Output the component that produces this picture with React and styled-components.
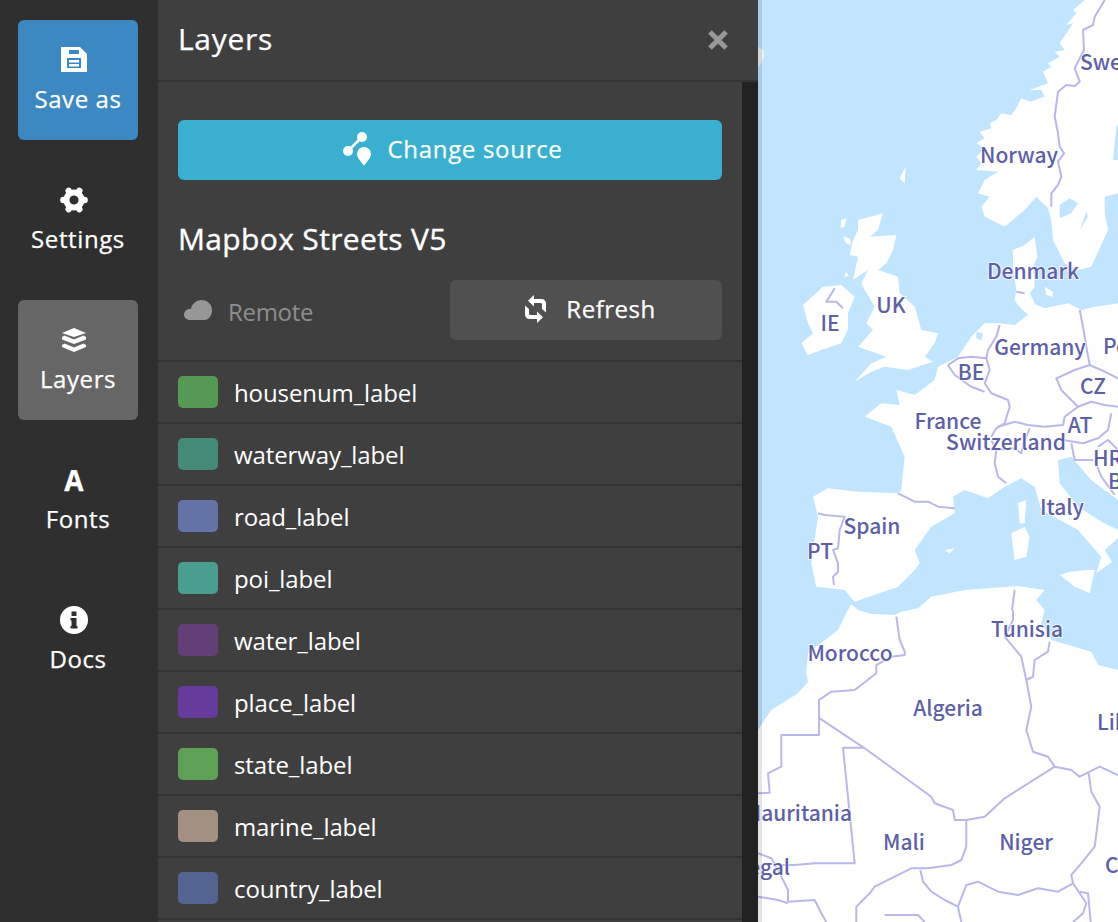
import React from 'react';
import styled, { createGlobalStyle } from 'styled-components';

const Global = createGlobalStyle`
  html, body { margin: 0; padding: 0; height: 100%; overflow: hidden; background: #2f2f2f; }
  * { box-sizing: border-box; }
`;

const Shell = styled.div`
  display: flex;
  width: 100vw;
  height: 100vh;
  overflow: hidden;
  font-family: "Open Sans", "Noto Sans", sans-serif;
  color: #fff;
`;

const Sidebar = styled.nav`
  flex: 0 0 158px;
  display: flex;
  flex-direction: column;
  gap: 20px;
  padding: 20px 18px;
  background: #2f2f2f;
`;

const tones = { primary: '#3b88c3', active: '#666666', plain: 'transparent' };

const NavButton = styled.button`
  width: 120px;
  height: 120px;
  flex: none;
  border: 0;
  border-radius: 6px;
  padding: 26px 0 0;
  background: ${(p) => tones[p.$tone || 'plain']};
  color: #fff;
  font: 400 24px/32px "Open Sans", sans-serif;
  letter-spacing: 0.6px;
  -webkit-text-stroke: 0.25px #fff;
  display: flex;
  flex-direction: column;
  align-items: center;
  gap: 9px;
`;

const NavIcon = styled.span`
  display: flex;
  align-items: center;
  justify-content: center;
  width: 32px;
  height: 28px;
  margin-right: 8px;
  font-weight: 700;
  font-size: 28px;
  line-height: 28px;
  letter-spacing: 0;
`;

const Panel = styled.section`
  flex: 0 0 600px;
  display: flex;
  flex-direction: column;
  background: #3f3f3f;
  position: relative;
  z-index: 1;
  box-shadow: 4px 0 0 rgba(0, 0, 0, 0.11);
`;

const PanelHeader = styled.header`
  flex: 0 0 82px;
  display: flex;
  align-items: center;
  justify-content: space-between;
  padding: 0 30px 0 20px;
  border-bottom: 2px solid #333;
`;

const PanelTitle = styled.h1`
  margin: 0 0 2px;
  font: 400 30px/38px "Open Sans", sans-serif;
  letter-spacing: 0.7px;
  -webkit-text-stroke: 0.25px #fff;
`;

const CloseIcon = styled.svg`
  width: 20px;
  height: 20px;
  display: block;
`;

const PanelBody = styled.div`
  flex: 1;
  min-height: 0;
  display: flex;
`;

const Content = styled.div`
  flex: 1;
  min-width: 0;
  overflow: hidden;
`;

const Scrollbar = styled.div`
  flex: 0 0 16px;
  background: #222;
`;

const Intro = styled.div`
  padding: 38px 20px 20px;
`;

const SourceButton = styled.button`
  width: 100%;
  height: 60px;
  border: 0;
  border-radius: 6px;
  padding: 0 0 2px 6px;
  background: #3ab0d0;
  color: #fff;
  font: 400 24px/32px "Open Sans", sans-serif;
  letter-spacing: 0.7px;
  -webkit-text-stroke: 0.25px #fff;
  display: flex;
  align-items: center;
  justify-content: center;
  gap: 16px;
`;

const SourceName = styled.h2`
  margin: 0;
  padding: 40px 0 22px;
  font: 500 30px/38px "Open Sans", sans-serif;
  letter-spacing: 0.35px;
  -webkit-text-stroke: 0.35px #fff;
`;

const StatusRow = styled.div`
  display: flex;
  align-items: center;
  justify-content: space-between;
  height: 60px;
`;

const Status = styled.span`
  display: flex;
  align-items: center;
  gap: 16px;
  padding: 3px 0 0 6px;
  color: #8e8e8e;
  font-size: 24px;
  line-height: 32px;
  letter-spacing: -0.3px;
`;

const StatusGlyph = styled.svg`
  width: 28px;
  height: 20px;
  margin-top: -3px;
  display: block;
`;

const RefreshButton = styled.button`
  width: 272px;
  height: 60px;
  border: 0;
  border-radius: 6px;
  padding: 0 0 2px 9px;
  background: #505050;
  color: #fff;
  font: 400 24px/32px "Open Sans", sans-serif;
  letter-spacing: 0.5px;
  -webkit-text-stroke: 0.25px #fff;
  display: flex;
  align-items: center;
  justify-content: center;
  gap: 20px;
`;

const LayerList = styled.ul`
  list-style: none;
  margin: 0;
  padding: 0;
`;

const LayerRow = styled.li`
  height: 62px;
  border-top: 2px solid #333;
  display: flex;
  align-items: center;
  gap: 16px;
  padding: 0 20px;
  font-size: 24px;
  line-height: 32px;
`;

const LayerName = styled.span`
  padding-top: 2px;
  letter-spacing: -0.1px;
`;

const Swatch = styled.span`
  flex: none;
  width: 40px;
  height: 32px;
  border-radius: 5px;
  background: ${(p) => p.$color};
`;

const MapPane = styled.main`
  flex: 1;
  min-width: 0;
  background: #c2e5ff;
  overflow: hidden;
`;

const MapSvg = styled.svg`
  display: block;
  width: 360px;
  height: 922px;
`;

const CountryLabel = styled.text`
  font-family: "Noto Sans CJK JP", "Noto Sans", sans-serif;
  font-size: 21px;
  font-weight: 500;
  fill: #5d60a8;
  stroke: rgba(255, 255, 255, 0.75);
  stroke-width: 2px;
  paint-order: stroke;
`;

const z = (oy, s) =>
  s
    .trim()
    .split(/\s+/)
    .map((pair) => {
      const [x, y] = pair.split(',').map(Number);
      return `${(758 + x / 3).toFixed(1)},${(oy + y / 3).toFixed(1)}`;
    })
    .join(' ');

const Z7 = 0;
const Z8 = 300;
const Z9 = 610;

const land = [
  // Scandinavia
  z(Z7, '980,0 945,30 955,40 925,75 945,70 905,130 920,150 890,155 905,170 870,190 880,200 855,215 870,250 815,270 850,270 860,290 815,305 790,295 775,325 760,345 730,340 715,360 695,370 700,385 665,395 680,415 655,430 680,445 655,470 670,490 655,510 720,515 680,540 660,580 695,590 670,620 680,650 740,680 800,630 835,590 870,625 880,660 885,720 920,790 960,810 1000,800 1050,690 1040,640 1040,590 1080,580 1080,0'),
  // Denmark
  z(Z7, '765,750 800,735 830,710 838,770 825,800 830,860 815,880 830,910 800,935 770,900 775,870 765,800'),
  z(Z7, '860,860 885,875 885,890 865,885'),
  // Europe
  z(Z8, '775,10 810,45 770,75 725,70 680,70 640,110 600,170 540,200 530,240 490,270 470,285 415,270 425,315 370,310 320,350 400,380 440,470 430,570 420,580 300,575 210,565 165,590 180,650 160,790 175,860 260,870 290,905 420,860 470,810 485,790 470,750 520,680 590,640 585,590 620,570 690,595 740,560 790,535 830,560 850,630 960,690 1030,770 1015,820 1062,785 1040,750 1080,715 1080,690 1030,665 960,620 905,550 900,480 940,470 1000,540 1080,600 1080,10 1010,20 970,30 930,10 860,25 800,0'),
  // Great Britain
  z(Z7, '300,660 375,640 360,690 335,710 415,705 405,750 385,790 360,810 420,830 425,880 470,920') + ' ' +
    z(Z8, '490,90 540,100 530,130 500,170 525,185 450,210 380,200 340,215 290,245 340,190 385,170 300,140 345,90 325,70') + ' ' +
    z(Z7, '350,920 320,870 310,850 330,810 285,840 300,770 275,765 285,720 300,690'),
  // Ireland
  z(Z7, '135,915 195,860 250,855 290,890') + ' ' + z(Z8, '270,40 270,90 250,130 190,150 150,165 130,130 165,100 150,70 135,15'),
  // Africa
  z(Z9, '0,360 40,300 120,250 150,215 145,190 150,130 240,60 270,0') + ' ' + z(Z8, '280,912 300,930') + ' ' +
    z(Z9, '340,12 410,15 430,5') + ' ' + z(Z8, '480,925 520,890 620,870 780,858 860,870 835,900 860,930') + ' ' +
    z(Z9, '850,40 880,90 1000,125 1020,165 1080,180') + ' 1118,922 758,922',
  // Islands
  z(Z8, '780,610 805,600 800,670 785,670'),
  z(Z8, '760,700 800,680 815,710 805,770 770,780'),
  z(Z8, '905,825 935,815 985,810 1010,810 995,880 950,860'),
  z(Z8, '560,750 590,745 575,760'),
  z(Z7, '250,660 265,655 260,680 248,685'),
  z(Z7, '255,710 275,715 280,735 265,730'),
  z(Z7, '425,535 443,500 440,550'),
  z(Z7, '265,815 272,828 258,830'),
];

const water = [
  z(Z7, '1075,380 1080,375 1080,480 1065,480'),
  z(Z7, '905,615 935,595 960,610 940,640 905,655'),
  z(Z7, '965,690 985,635 990,650'),
  z(Z7, '1040,790 1060,730 1050,780'),
  z(Z8, '655,95 675,100 670,122 655,115'),
];

const iceland = z(Z7, '0,140 15,150 18,170 5,200 0,195');

const borders = [
  z(Z7, '1040,0 1010,50 1005,75 975,90 978,150 950,205 965,245 950,258 925,255 900,275 890,350 900,400 905,440 918,460 900,485 910,530 900,555 880,580 880,620'),
  z(Z7, '230,865 205,905 235,905 255,925'),
  z(Z7, '775,875 800,880'),
  z(Z8, '725,75 715,110 690,150 685,175 695,210 680,250 700,280 750,300 755,320 740,370 715,385 700,410'),
  z(Z8, '570,195 600,175 640,170 685,175'),
  z(Z8, '570,195 590,225 640,260 680,275'),
  z(Z8, '965,30 975,80 985,140 995,195'),
  z(Z8, '995,195 950,210 895,235 910,270 960,320 1000,305 1040,315 1080,320'),
  z(Z8, '995,195 1040,215 1080,235'),
  z(Z8, '960,320 920,350 915,375 860,380 810,375 770,365 720,380'),
  z(Z8, '915,420 975,430 1020,415 1050,390 1060,340'),
  z(Z8, '700,420 715,450 770,445 790,460 800,420 815,385'),
  z(Z8, '715,450 710,490 720,530 745,550'),
  z(Z8, '940,430 950,480 1005,480'),
  z(Z8, '1020,440 1050,420 1080,450'),
  z(Z8, '1010,480 1030,530 1070,585'),
  z(Z8, '420,580 470,605 510,605 540,620 590,625'),
  z(Z8, '180,640 200,645 260,650 245,690 240,745 225,750 240,790 240,815 225,830 228,855'),
  z(Z8, '770,870 762,930'),
  z(Z9, '415,20 425,90 440,125 440,135 400,140 355,165 355,190 290,240 220,245 183,270 183,375 70,375 70,470 30,490 35,548 0,550'),
  z(Z9, '185,325 320,415 520,560 530,580 585,600 590,630 625,630 680,620 740,565 890,470'),
  z(Z9, '320,413 255,413 290,760 170,760 110,765 60,765'),
  z(Z9, '765,0 765,30 740,80 790,140 805,210 820,290 805,360 825,425 870,440 890,470'),
  z(Z9, '875,95 870,125 830,150 825,200 805,210'),
  z(Z9, '890,470 940,480 965,500 1025,470 1080,495'),
  z(Z9, '992,490 1000,545 1025,590 1010,710 970,760 940,795 945,820'),
  z(Z9, '625,630 625,710 610,750 580,765 510,775 460,775 410,800 350,830 335,850 295,890 295,936'),
  z(Z9, '487,780 495,815 520,845 560,870 600,890 610,936'),
  z(Z9, '600,890 625,825 660,815 720,845 780,855 840,835 900,845 945,820'),
  z(Z9, '945,820 965,850 985,880 975,910 945,936'),
  z(Z9, '0,730 40,745 65,790 90,840 90,875 170,870 190,910 205,936'),
  z(Z9, '0,860 60,870 90,880'),
  z(Z9, '380,915 480,915 500,936'),
  z(Z9, '965,845 990,850 998,936'),
];

const labels = [
  ['Swe', 1080, 70, 'start'],
  ['Norway', 1019, 163],
  ['Denmark', 1033, 279],
  ['UK', 891, 313],
  ['IE', 830, 331],
  ['Germany', 1040, 355],
  ['Po', 1103, 354, 'start'],
  ['BE', 971, 380],
  ['CZ', 1093, 394],
  ['France', 948, 429],
  ['Switzerland', 1006, 450],
  ['AT', 1080, 433],
  ['HR', 1093, 466, 'start'],
  ['B', 1108, 489, 'start'],
  ['Italy', 1062, 515],
  ['Spain', 872, 534],
  ['PT', 820, 559],
  ['Morocco', 850, 661],
  ['Tunisia', 1027, 637],
  ['Algeria', 948, 716],
  ['Lib', 1097, 730, 'start'],
  ['Mauritania', 852, 821, 'end'],
  ['Senegal', 790, 875, 'end'],
  ['Mali', 904, 850],
  ['Niger', 1026, 850],
  ['Chad', 1105, 873, 'start'],
];

const SaveIcon = () => (
  <svg width="26" height="26" viewBox="0 1 26 26" fill="#fff">
    <path
      fillRule="evenodd"
      d="M0 0H18L26 8V26H0ZM8 4V8H18V4ZM6 12V22H20V12ZM8 14H18V16.500H8ZM8 18H18V20.500H8Z"
    />
  </svg>
);

const GearIcon = () => (
  <svg width="28" height="26" viewBox="-14 -13 28 26" fill="none" stroke="#fff">
    <circle r="7.6" strokeWidth="6" />
    {[0, 60, 120, 180, 240, 300].map((a) => (
      <line key={a} x1="8" y1="0" x2="10.6" y2="0" strokeWidth="6.4" strokeLinecap="round" transform={`rotate(${a})`} />
    ))}
  </svg>
);

const LayersIcon = () => (
  <svg width="24" height="24" viewBox="0 0 24 24" fill="#fff">
    <path d="M12 0L24 5 12 9 0 5Z" />
    <path d="M2.500 7.500L12 11.500 21.500 7.500 24 9V11.500L12 16 0 11.500V9Z" />
    <path d="M2.500 15.500L12 19.500 21.500 15.500 24 17V19L12 24 0 19V17Z" />
  </svg>
);

const InfoIcon = () => (
  <svg width="28" height="28" viewBox="0 0 28 28" fill="#fff">
    <path
      fillRule="evenodd"
      d="M14 0a14 14 0 1 1 0 28 14 14 0 0 1 0-28ZM11.500 5.500V10H16.500V5.500ZM10.500 12V14.500H11.500V20H10.500V22.500H17.500V20H16.500V12Z"
    />
  </svg>
);

const SourceIcon = () => (
  <svg width="28" height="34" viewBox="0 0 28 34" fill="#fff" stroke="none">
    <circle cx="5" cy="19" r="5" />
    <circle cx="19" cy="5" r="5" />
    <line x1="5" y1="19" x2="19" y2="5" stroke="#fff" strokeWidth="2.6" />
    <path d="M21 15a7 7 0 0 1 7 7c0 3.500-4 8-7 11.500-3-3.500-7-8-7-11.500a7 7 0 0 1 7-7Z" />
  </svg>
);

const CloudIcon = () => (
  <StatusGlyph viewBox="0 0 28 20" fill="#979797">
    <path d="M6 20C2.500 20 0 17.500 0 14.500S2.500 9 5.500 9c.5 0 1 .1 1.300.2C8 4 12 0 17.500 0 23.500 0 28 4.500 28 10s-3 10-8 10Z" />
  </StatusGlyph>
);

const RefreshIcon = () => (
  <svg width="21" height="28" viewBox="0 0 21 28" fill="#fff">
    <path d="M9 0L3 5.700 9 11.500V8H15.500C16.300 8 17 8.700 17 9.500V14L21 17.500V8.500C21 6 19 4 16.500 4H9Z" />
    <path d="M12 28L18 22.300 12 16.500V20H5.500C4.700 20 4 19.300 4 18.500V14L0 10.500V19.500C0 22 2 24 4.500 24H12Z" />
  </svg>
);

const layers = [
  ['housenum_label', '#549a55'],
  ['waterway_label', '#448a77'],
  ['road_label', '#6373a8'],
  ['poi_label', '#4a9e90'],
  ['water_label', '#633f78'],
  ['place_label', '#653c9c'],
  ['state_label', '#5ca155'],
  ['marine_label', '#a29080'],
  ['country_label', '#52648f'],
  ['', 'transparent'],
];

export default function App() {
  return (
    <>
      <Global />
      <Shell>
        <Sidebar>
          <NavButton $tone="primary">
            <NavIcon><SaveIcon /></NavIcon>
            Save as
          </NavButton>
          <NavButton>
            <NavIcon><GearIcon /></NavIcon>
            Settings
          </NavButton>
          <NavButton $tone="active">
            <NavIcon><LayersIcon /></NavIcon>
            Layers
          </NavButton>
          <NavButton>
            <NavIcon>A</NavIcon>
            Fonts
          </NavButton>
          <NavButton>
            <NavIcon><InfoIcon /></NavIcon>
            Docs
          </NavButton>
        </Sidebar>
        <Panel>
          <PanelHeader>
            <PanelTitle>Layers</PanelTitle>
            <CloseIcon viewBox="0 0 20 20" stroke="#999" strokeWidth="5">
              <path d="M2 2L18 18M18 2L2 18" />
            </CloseIcon>
          </PanelHeader>
          <PanelBody>
            <Content>
              <Intro>
                <SourceButton>
                  <SourceIcon />
                  Change source
                </SourceButton>
                <SourceName>Mapbox Streets V5</SourceName>
                <StatusRow>
                  <Status>
                    <CloudIcon />
                    Remote
                  </Status>
                  <RefreshButton>
                    <RefreshIcon />
                    Refresh
                  </RefreshButton>
                </StatusRow>
              </Intro>
              <LayerList>
                {layers.map(([name, color], i) => (
                  <LayerRow key={i}>
                    <Swatch $color={color} />
                    <LayerName>{name}</LayerName>
                  </LayerRow>
                ))}
              </LayerList>
            </Content>
            <Scrollbar />
          </PanelBody>
        </Panel>
        <MapPane>
          <MapSvg viewBox="758 0 360 922">
            <g fill="#fff">
              {land.map((p, i) => (
                <polygon key={i} points={p} />
              ))}
            </g>
            <polygon points={iceland} fill="#eef3f5" />
            <g fill="#c2e5ff">
              {water.map((p, i) => (
                <polygon key={i} points={p} />
              ))}
            </g>
            <g fill="none" stroke="#b8b8ec" strokeWidth="2" strokeLinejoin="round">
              {borders.map((p, i) => (
                <polyline key={i} points={p} />
              ))}
            </g>
            {labels.map(([t, x, y, anchor]) => (
              <CountryLabel key={t} x={x} y={y} textAnchor={anchor || 'middle'}>
                {t}
              </CountryLabel>
            ))}
          </MapSvg>
        </MapPane>
      </Shell>
    </>
  );
}
